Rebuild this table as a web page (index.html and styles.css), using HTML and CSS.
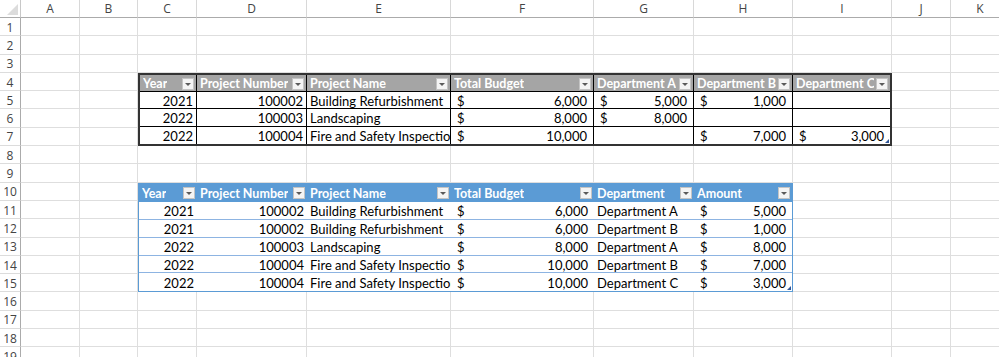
FILE: index.html
```html
<!DOCTYPE html>
<html>
<head>
<meta charset="utf-8">
<link rel="stylesheet" href="styles.css">
</head>
<body>
<div class="sheet">
  <div class="corner"></div>
  <div class="ch">A</div><div class="ch">B</div><div class="ch">C</div><div class="ch">D</div><div class="ch">E</div><div class="ch">F</div><div class="ch">G</div><div class="ch">H</div><div class="ch">I</div><div class="ch">J</div><div class="ch">K</div>

  <div class="rh">1</div><div class="c"></div><div class="c"></div><div class="c"></div><div class="c"></div><div class="c"></div><div class="c"></div><div class="c"></div><div class="c"></div><div class="c"></div><div class="c"></div><div class="c"></div>
  <div class="rh">2</div><div class="c"></div><div class="c"></div><div class="c"></div><div class="c"></div><div class="c"></div><div class="c"></div><div class="c"></div><div class="c"></div><div class="c"></div><div class="c"></div><div class="c"></div>
  <div class="rh">3</div><div class="c"></div><div class="c"></div><div class="c"></div><div class="c"></div><div class="c"></div><div class="c"></div><div class="c"></div><div class="c"></div><div class="c"></div><div class="c"></div><div class="c"></div>
  <div class="rh">4</div><div class="c"></div><div class="c"></div><div class="c"></div><div class="c"></div>
  <div class="rh">5</div><div class="c"></div><div class="c"></div><div class="c"></div><div class="c"></div>
  <div class="rh">6</div><div class="c"></div><div class="c"></div><div class="c"></div><div class="c"></div>
  <div class="rh">7</div><div class="c"></div><div class="c"></div><div class="c"></div><div class="c"></div>
  <div class="rh">8</div><div class="c"></div><div class="c"></div><div class="c"></div><div class="c"></div><div class="c"></div><div class="c"></div><div class="c"></div><div class="c"></div><div class="c"></div><div class="c"></div><div class="c"></div>
  <div class="rh">9</div><div class="c"></div><div class="c"></div><div class="c"></div><div class="c"></div><div class="c"></div><div class="c"></div><div class="c"></div><div class="c"></div><div class="c"></div><div class="c"></div><div class="c"></div>
  <div class="rh">10</div><div class="c"></div><div class="c"></div><div class="c"></div><div class="c"></div><div class="c"></div>
  <div class="rh">11</div><div class="c"></div><div class="c"></div><div class="c"></div><div class="c"></div><div class="c"></div>
  <div class="rh">12</div><div class="c"></div><div class="c"></div><div class="c"></div><div class="c"></div><div class="c"></div>
  <div class="rh">13</div><div class="c"></div><div class="c"></div><div class="c"></div><div class="c"></div><div class="c"></div>
  <div class="rh">14</div><div class="c"></div><div class="c"></div><div class="c"></div><div class="c"></div><div class="c"></div>
  <div class="rh">15</div><div class="c"></div><div class="c"></div><div class="c"></div><div class="c"></div><div class="c"></div>
  <div class="rh">16</div><div class="c"></div><div class="c"></div><div class="c"></div><div class="c"></div><div class="c"></div><div class="c"></div><div class="c"></div><div class="c"></div><div class="c"></div><div class="c"></div><div class="c"></div>
  <div class="rh">17</div><div class="c"></div><div class="c"></div><div class="c"></div><div class="c"></div><div class="c"></div><div class="c"></div><div class="c"></div><div class="c"></div><div class="c"></div><div class="c"></div><div class="c"></div>
  <div class="rh">18</div><div class="c"></div><div class="c"></div><div class="c"></div><div class="c"></div><div class="c"></div><div class="c"></div><div class="c"></div><div class="c"></div><div class="c"></div><div class="c"></div><div class="c"></div>
  <div class="rh">19</div><div class="c"></div><div class="c"></div><div class="c"></div><div class="c"></div><div class="c"></div><div class="c"></div><div class="c"></div><div class="c"></div><div class="c"></div><div class="c"></div><div class="c"></div>

  <div class="tbl t1">
    <div class="th"><span class="lbl">Year</span><span class="dd"></span></div>
    <div class="th"><span class="lbl">Project Number</span><span class="dd"></span></div>
    <div class="th"><span class="lbl">Project Name</span><span class="dd"></span></div>
    <div class="th"><span class="lbl">Total Budget</span><span class="dd"></span></div>
    <div class="th"><span class="lbl">Department A</span><span class="dd"></span></div>
    <div class="th"><span class="lbl">Department B</span><span class="dd"></span></div>
    <div class="th"><span class="lbl">Department C</span><span class="dd"></span></div>

    <div class="td num">2021</div><div class="td num">100002</div><div class="td txt">Building Refurbishment</div><div class="td acc"><span>$</span><span>6,000</span></div><div class="td acc"><span>$</span><span>5,000</span></div><div class="td acc"><span>$</span><span>1,000</span></div><div class="td"></div>
    <div class="td num">2022</div><div class="td num">100003</div><div class="td txt">Landscaping</div><div class="td acc"><span>$</span><span>8,000</span></div><div class="td acc"><span>$</span><span>8,000</span></div><div class="td"></div><div class="td"></div>
    <div class="td num">2022</div><div class="td num">100004</div><div class="td txt">Fire and Safety Inspection</div><div class="td acc"><span>$</span><span>10,000</span></div><div class="td"></div><div class="td acc"><span>$</span><span>7,000</span></div><div class="td acc"><span>$</span><span>3,000</span></div>
  </div>

  <div class="tbl t2">
    <div class="th"><span class="lbl">Year</span><span class="dd"></span></div>
    <div class="th"><span class="lbl">Project Number</span><span class="dd"></span></div>
    <div class="th"><span class="lbl">Project Name</span><span class="dd"></span></div>
    <div class="th"><span class="lbl">Total Budget</span><span class="dd"></span></div>
    <div class="th"><span class="lbl">Department</span><span class="dd"></span></div>
    <div class="th"><span class="lbl">Amount</span><span class="dd"></span></div>

    <div class="td num">2021</div><div class="td num">100002</div><div class="td txt">Building Refurbishment</div><div class="td acc"><span>$</span><span>6,000</span></div><div class="td txt">Department A</div><div class="td acc"><span>$</span><span>5,000</span></div>
    <div class="td num">2021</div><div class="td num">100002</div><div class="td txt">Building Refurbishment</div><div class="td acc"><span>$</span><span>6,000</span></div><div class="td txt">Department B</div><div class="td acc"><span>$</span><span>1,000</span></div>
    <div class="td num">2022</div><div class="td num">100003</div><div class="td txt">Landscaping</div><div class="td acc"><span>$</span><span>8,000</span></div><div class="td txt">Department A</div><div class="td acc"><span>$</span><span>8,000</span></div>
    <div class="td num">2022</div><div class="td num">100004</div><div class="td txt">Fire and Safety Inspection</div><div class="td acc"><span>$</span><span>10,000</span></div><div class="td txt">Department B</div><div class="td acc"><span>$</span><span>7,000</span></div>
    <div class="td num">2022</div><div class="td num">100004</div><div class="td txt">Fire and Safety Inspection</div><div class="td acc"><span>$</span><span>10,000</span></div><div class="td txt">Department C</div><div class="td acc"><span>$</span><span>3,000</span></div>
  </div>
</div>
</body>
</html>
```
FILE: styles.css
```css
* { box-sizing: border-box; }
html, body { margin: 0; padding: 0; background: #fff; overflow: hidden; }
body { width: 999px; height: 357px; }

.sheet {
  display: grid;
  grid-template-columns: 21px 59px 58px 59px 110px 144px 143px 100px 99px 99px 59px 59px;
  grid-template-rows: 18px repeat(19, 18.3px);
  width: 1010px;
  height: 357px;
  overflow: hidden;
  font-family: Lato, "Liberation Sans", sans-serif;
  font-size: 13px;
  color: #000;
}

.corner {
  position: relative;
  border-right: 1px solid #c8c8c8;
  border-bottom: 1px solid #ababab;
  background: #fff;
}
.corner::after {
  content: "";
  position: absolute;
  right: 2px;
  bottom: 2px;
  border-left: 11px solid transparent;
  border-bottom: 11px solid #dcdcdc;
}

.ch {
  display: flex;
  align-items: center;
  justify-content: center;
  border-right: 1px solid #d8d8d8;
  border-bottom: 1px solid #ababab;
  font-family: "Open Sans", "Noto Sans", sans-serif;
  font-size: 12px;
  color: #444;
}

.rh {
  display: flex;
  align-items: center;
  justify-content: center;
  border-right: 1px solid #ababab;
  border-bottom: 1px solid #dcdcdc;
  font-family: "Open Sans", "Noto Sans", sans-serif;
  font-size: 12px;
  color: #444;
  padding-top: 1px;
}

.c {
  border-right: 1px solid #dedede;
  border-bottom: 1px solid #dedede;
}

.tbl {
  position: relative;
  display: grid;
  background: #fff;
}
.tbl::after {
  content: "";
  position: absolute;
  right: 1px;
  bottom: 1px;
  border-left: 4px solid transparent;
  border-bottom: 4px solid #2f5597;
}

.t1 {
  grid-column: 4 / 11;
  grid-row: 5 / 9;
  border: 2px solid #333;
  grid-template-columns: 57px 110px 144px 143px 100px 99px 97px;
  grid-template-rows: repeat(4, 1fr);
}
.t2 {
  grid-column: 4 / 10;
  grid-row: 11 / 17;
  border: 1px solid #5b9bd5;
  grid-template-columns: 58px 110px 144px 143px 100px 98px;
  grid-template-rows: repeat(6, 1fr);
}

.th {
  display: flex;
  align-items: center;
  justify-content: space-between;
  padding: 1px 2px 0 3px;
  font-size: 12.5px;
  font-weight: 700;
  color: #fff;
  overflow: hidden;
  white-space: nowrap;
}
.t1 .th { background: #a5a5a5; border-right: 1px solid #000; border-bottom: 1px solid #000; }
.t1 .th:nth-child(7) { border-right: 0; }
.t2 .th { background: #5b9bd5; }

.lbl { overflow: hidden; }

.dd {
  position: relative;
  flex: none;
  width: 12px;
  height: 12px;
  background: #f4f4f4;
  border: 1px solid #c4c4c4;
  margin-left: 2px;
}
.dd::after {
  content: "";
  position: absolute;
  left: 2px;
  top: 4px;
  border-left: 3px solid transparent;
  border-right: 3px solid transparent;
  border-top: 3px solid #5a5a5a;
}

.td {
  display: flex;
  align-items: center;
  padding: 1px 3px 0 3px;
  white-space: nowrap;
  overflow: hidden;
}
.t1 .td { border-right: 1px solid #000; border-bottom: 1px solid #000; }
.t1 .td:nth-child(7n) { border-right: 0; }
.t1 .td:nth-last-child(-n+7) { border-bottom: 0; }
.t2 .td { border-bottom: 1px solid #8db4e2; }
.t2 .td:nth-last-child(-n+6) { border-bottom: 0; }

.num { justify-content: flex-end; }
.txt { justify-content: flex-start; }
.acc { justify-content: space-between; padding: 1px 6px 0 6px; }
```
